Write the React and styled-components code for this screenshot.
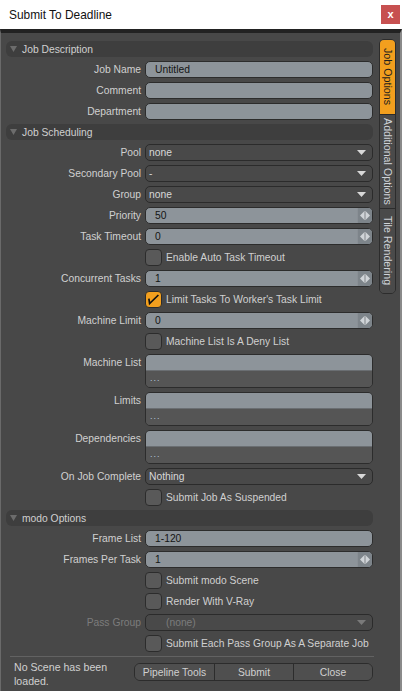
import React from 'react'
import styled, { createGlobalStyle } from 'styled-components'

const GlobalStyle = createGlobalStyle`
  html, body {
    margin: 0;
    padding: 0;
    background: #484848;
  }
  * { box-sizing: border-box; }
`

const FONT = `"Liberation Sans", Arial, sans-serif`

const Caret = () => (
  <svg width="7" height="6" viewBox="0 0 7 6">
    <path d="M0 0 H7 L3.5 6 Z" fill="#6c6c6c" />
  </svg>
)

const DropArrow = ({ dim }) => (
  <svg width="9" height="5" viewBox="0 0 9 5">
    <path d="M0 0 H9 L4.5 5 Z" fill={dim ? '#7a7a7a' : '#d8d8d8'} />
  </svg>
)

const SpinArrows = () => (
  <svg width="10" height="9" viewBox="0 0 10 9">
    <path d="M4 0.5 V8.5 L0 4.5 Z" fill="#d0d4d8" />
    <path d="M6 0.5 V8.5 L10 4.5 Z" fill="#d0d4d8" />
    <rect x="4.6" y="0" width="0.8" height="9" fill="#e8e8e8" />
  </svg>
)

const Tick = () => (
  <svg width="17" height="17" viewBox="0 0 17 17">
    <path d="M4 8.5 L4.6 12.6 L12.8 4.6" stroke="#111" strokeWidth="1.7" fill="none" strokeLinecap="square" />
  </svg>
)

const Section = ({ title, first }) => (
  <SectionHeader $first={first}>
    <Caret />
    <span>{title}</span>
  </SectionHeader>
)

const TextRow = ({ label, value }) => (
  <Row>
    <Label>{label}</Label>
    <TextField>{value}</TextField>
  </Row>
)

const ComboRow = ({ label, value, disabled }) => (
  <Row>
    <Label $dim={disabled}>{label}</Label>
    <Combo $dim={disabled}>
      <span>{value}</span>
      <DropArrow dim={disabled} />
    </Combo>
  </Row>
)

const SpinRow = ({ label, value }) => (
  <Row>
    <Label>{label}</Label>
    <SpinField>
      <SpinValue>{value}</SpinValue>
      <SpinButton><SpinArrows /></SpinButton>
    </SpinField>
  </Row>
)

const CheckRow = ({ text, checked }) => (
  <Row>
    <span />
    <CheckWrap>
      <Box $checked={checked}>{checked && <Tick />}</Box>
      <span>{text}</span>
    </CheckWrap>
  </Row>
)

const ListRow = ({ label }) => (
  <Row>
    <Label>{label}</Label>
    <ListField>
      <ListTop />
      <ListBottom>...</ListBottom>
    </ListField>
  </Row>
)

const App = () => {
  return (
    <Window>
      <GlobalStyle />
      <TitleBar>
        <Title>Submit To Deadline</Title>
        <CloseBtn>x</CloseBtn>
      </TitleBar>
      <Body>
        <Main>
          <Section title="Job Description" first />
          <TextRow label="Job Name" value="Untitled" />
          <TextRow label="Comment" value="" />
          <TextRow label="Department" value="" />

          <Section title="Job Scheduling" />
          <ComboRow label="Pool" value="none" />
          <ComboRow label="Secondary Pool" value="-" />
          <ComboRow label="Group" value="none" />
          <SpinRow label="Priority" value="50" />
          <SpinRow label="Task Timeout" value="0" />
          <CheckRow text="Enable Auto Task Timeout" />
          <SpinRow label="Concurrent Tasks" value="1" />
          <CheckRow text="Limit Tasks To Worker's Task Limit" checked />
          <SpinRow label="Machine Limit" value="0" />
          <CheckRow text="Machine List Is A Deny List" />
          <ListRow label="Machine List" />
          <ListRow label="Limits" />
          <ListRow label="Dependencies" />
          <ComboRow label="On Job Complete" value="Nothing" />
          <CheckRow text="Submit Job As Suspended" />

          <Section title="modo Options" />
          <TextRow label="Frame List" value="1-120" />
          <SpinRow label="Frames Per Task" value="1" />
          <CheckRow text="Submit modo Scene" />
          <CheckRow text="Render With V-Ray" />
          <ComboRow label="Pass Group" value="(none)" disabled />
          <CheckRow text="Submit Each Pass Group As A Separate Job" />

          <Footer>
            <Status>No Scene has been<br />loaded.</Status>
            <ButtonGroup>
              <Btn>Pipeline Tools</Btn>
              <Btn>Submit</Btn>
              <Btn>Close</Btn>
            </ButtonGroup>
          </Footer>
        </Main>
        <TabStrip>
          <Tab $active $h={74}>Job Options</Tab>
          <Tab $h={94}>Additional Options</Tab>
          <Tab $h={85}>Tile Rendering</Tab>
        </TabStrip>
      </Body>
    </Window>
  )
}

const Window = styled.div`
  width: 402px;
  height: 691px;
  display: flex;
  flex-direction: column;
  font-family: ${FONT};
  overflow: hidden;
`
const TitleBar = styled.div`
  height: 29px;
  background: #ffffff;
  display: flex;
  align-items: center;
  justify-content: space-between;
  padding: 0 2px 0 9px;
  flex-shrink: 0;
`
const Title = styled.div`
  font-size: 11.9px;
  color: #111;
  margin-top: 1px;
`
const CloseBtn = styled.div`
  width: 19px;
  height: 19px;
  background: #c75050;
  color: #fff;
  font-size: 11px;
  font-weight: bold;
  display: flex;
  align-items: center;
  justify-content: center;
  padding-bottom: 2px;
`
const Body = styled.div`
  flex: 1;
  display: flex;
  background: #484848;
  border-top: 4px solid #222;
  border-left: 1px solid #6a6a6a;
  border-right: 2px solid #8a8a8a;
  padding: 6px 0 0 5px;
`
const Main = styled.div`
  width: 367px;
  display: flex;
  flex-direction: column;
  padding-top: 2px;
`
const SectionHeader = styled.div`
  height: 16px;
  margin-top: ${p => (p.$first ? '0' : '4px')};
  background: #3e3e3e;
  border-radius: 6px;
  display: flex;
  align-items: center;
  gap: 5px;
  padding-left: 4px;
  color: #d0d0d0;
  font-size: 10.3px;
`
const Row = styled.div`
  display: grid;
  grid-template-columns: 135px 228px;
  column-gap: 4px;
  margin-top: 4px;
  align-items: start;
`
const Label = styled.div`
  height: 17px;
  line-height: 17px;
  text-align: right;
  font-size: 10.3px;
  color: ${p => (p.$dim ? '#7c7c7c' : '#d0d0d0')};
  white-space: nowrap;
`
const TextField = styled.div`
  height: 17px;
  line-height: 15px;
  background: #8d949a;
  border: 1px solid #2c2c2c;
  border-radius: 5px;
  padding-left: 9px;
  font-size: 10.3px;
  color: #141414;
`
const Combo = styled.div`
  height: 17px;
  background: #494949;
  border: 1px solid #2b2b2b;
  border-radius: 5px;
  display: flex;
  align-items: center;
  justify-content: space-between;
  padding: 0 6px 0 3px;
  font-size: 10.3px;
  color: ${p => (p.$dim ? '#7c7c7c' : '#d8d8d8')};
  span { padding-left: ${p => (p.$dim ? '17px' : '0')}; }
`
const SpinField = styled.div`
  height: 17px;
  background: #8d949a;
  border: 1px solid #2c2c2c;
  border-radius: 5px;
  display: flex;
  overflow: hidden;
`
const SpinValue = styled.div`
  flex: 1;
  line-height: 15px;
  padding-left: 9px;
  font-size: 10.3px;
  color: #141414;
`
const SpinButton = styled.div`
  width: 15px;
  background: #7d848a;
  border-left: 1px solid #8a9096;
  display: flex;
  align-items: center;
  justify-content: center;
`
const CheckWrap = styled.div`
  display: flex;
  align-items: center;
  gap: 4px;
  height: 17px;
  font-size: 10.3px;
  color: #d0d0d0;
  white-space: nowrap;
`
const Box = styled.div`
  width: 17px;
  height: 17px;
  border-radius: 4px;
  border: 1px solid #2c2c2c;
  background: ${p => (p.$checked ? '#f29f1e' : '#595959')};
  flex-shrink: 0;
  position: relative;
  svg { position: absolute; left: -1px; top: -1px; }
`
const ListField = styled.div`
  height: 34px;
  border: 1px solid #2c2c2c;
  border-radius: 5px;
  overflow: hidden;
  display: flex;
  flex-direction: column;
`
const ListTop = styled.div`
  height: 16px;
  background: #8d949a;
  border-bottom: 1px solid #6a6e72;
`
const ListBottom = styled.div`
  flex: 1;
  background: #555555;
  color: #b4c6dc;
  font-size: 9px;
  line-height: 14px;
  padding-left: 4px;
  letter-spacing: 1px;
`
const Footer = styled.div`
  margin-top: 4px;
  margin-left: 4px;
  margin-right: -1px;
  border-top: 1px solid #626262;
  display: flex;
  justify-content: space-between;
  padding-top: 3px;
`
const Status = styled.div`
  font-size: 10.6px;
  line-height: 14px;
  color: #d0d0d0;
  padding-left: 4px;
`
const ButtonGroup = styled.div`
  display: flex;
  margin-top: 3px;
  margin-right: 1px;
  height: 18px;
  border: 1px solid #2c2c2c;
  border-radius: 6px;
  overflow: hidden;
`
const Btn = styled.div`
  width: 79px;
  background: #4f4f4f;
  color: #d0d0d0;
  font-size: 10.3px;
  display: flex;
  align-items: center;
  justify-content: center;
  & + & { border-left: 1px solid #2c2c2c; }
`
const TabStrip = styled.div`
  margin-left: 6px;
  width: 17px;
  align-self: flex-start;
  display: flex;
  flex-direction: column;
  border: 1px solid #2c2c2c;
  border-radius: 5px;
  overflow: hidden;
`
const Tab = styled.div`
  height: ${p => p.$h}px;
  writing-mode: vertical-rl;
  display: flex;
  align-items: center;
  justify-content: center;
  font-size: 10.7px;
  background: ${p => (p.$active ? '#f29f1e' : '#4a4a4a')};
  color: ${p => (p.$active ? '#1e1e1e' : '#cfd3d8')};
  & + & { border-top: 1px solid #2c2c2c; }
`

export default App
